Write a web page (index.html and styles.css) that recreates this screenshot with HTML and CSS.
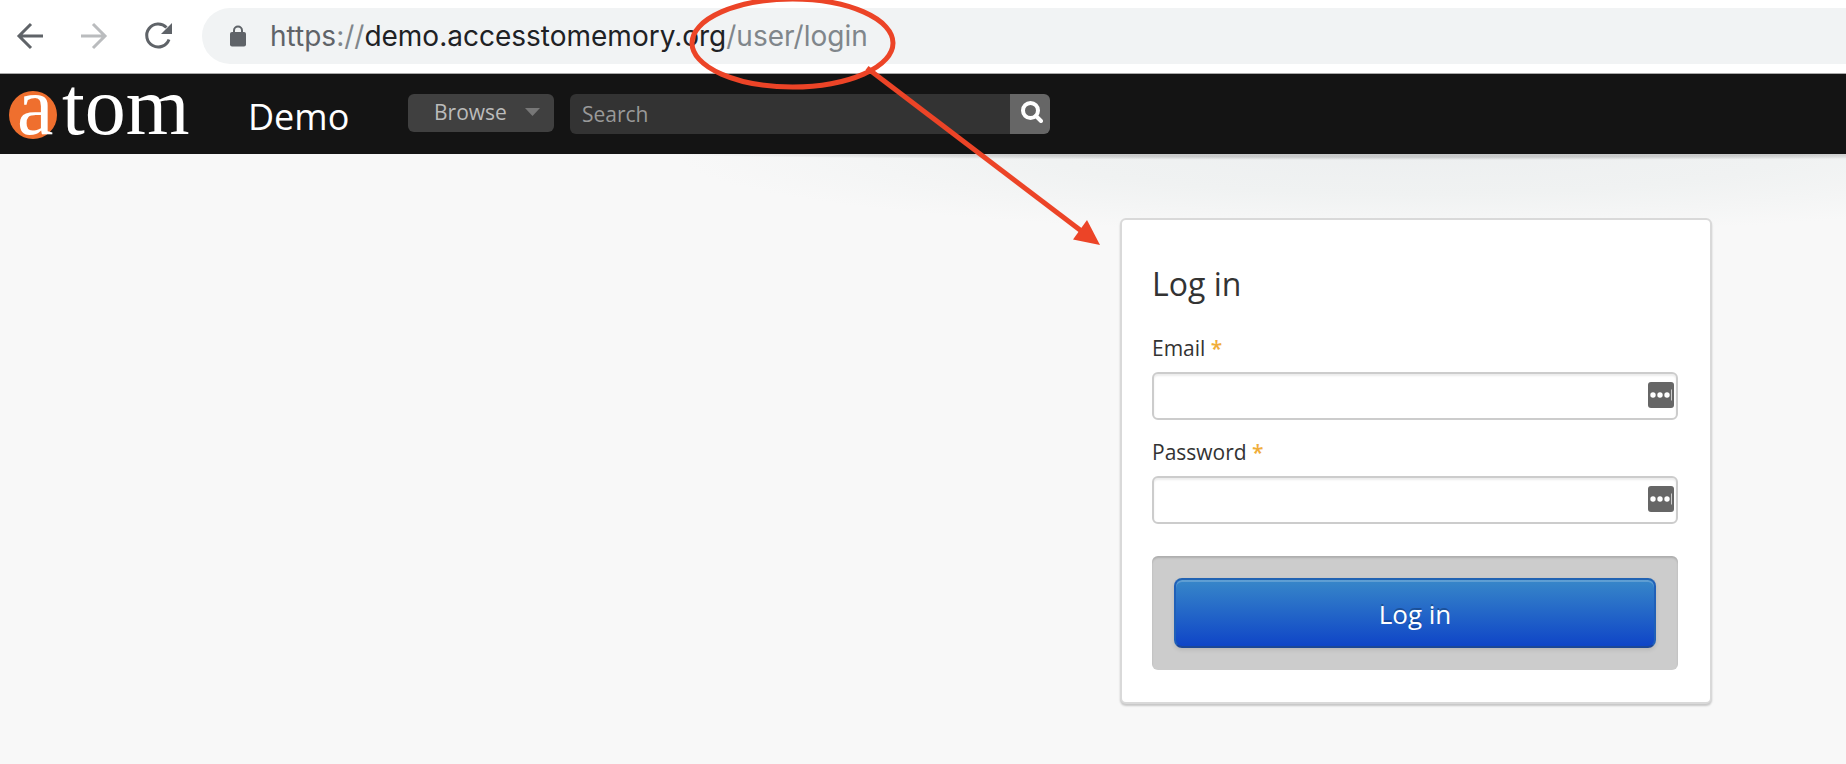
FILE: index.html
```html
<!DOCTYPE html>
<html lang="en">
<head>
<meta charset="utf-8">
<title>AtoM Demo - Log in</title>
<link rel="stylesheet" href="styles.css">
</head>
<body>
<div class="toolbar">
  <nav class="nav-buttons" aria-label="History">
    <button type="button" class="nav-button" aria-label="Back">
      <svg width="28" height="28" viewBox="0 0 28 28" fill="none" stroke="#5f6368" stroke-width="3"><path d="M27 14H4M15 2L3 14L15 26"/></svg>
    </button>
    <button type="button" class="nav-button" aria-label="Forward" disabled>
      <svg width="28" height="28" viewBox="0 0 28 28" fill="none" stroke="#babcbe" stroke-width="3"><path d="M1 14H24M13 2L25 14L13 26"/></svg>
    </button>
    <button type="button" class="nav-button" aria-label="Reload">
      <svg width="28" height="28" viewBox="0 0 28 28"><path d="M22.500 5.500A11.500 11.500 0 1 0 25 17.500" fill="none" stroke="#5f6368" stroke-width="3"/><path d="M28 1V12H17Z" fill="#5f6368"/></svg>
    </button>
  </nav>
  <div class="address" role="textbox" aria-label="Address" tabindex="0">
    <svg class="lock" width="16" height="22" viewBox="0 0 16 22"><path d="M4 8V5.500A4 4 0 0 1 12 5.500V8" fill="none" stroke="#5f6368" stroke-width="2"/><rect y="7" width="16" height="14.500" rx="2" fill="#5f6368"/></svg>
    <span class="url"><span class="scheme">https</span><span class="path">://</span>demo.accesstomemory.org<span class="path">/user/login</span></span>
  </div>
</div>
<header class="site-header">
  <a class="logo" href="#" aria-label="AtoM">
    <svg class="logo-mark" width="184" height="56" viewBox="0 0 184 56"><circle cx="25" cy="29" r="24" fill="#ef6f2e"/><g class="logo-text"><text x="9" y="48">a</text><text x="54" y="48">tom</text></g></svg>
  </a>
  <a class="site-title" href="#">Demo</a>
  <button type="button" class="browse">Browse<svg width="15" height="8" viewBox="0 0 15 8"><path d="M0 0H15L7.500 8Z" fill="#777"/></svg></button>
  <form class="search" role="search">
    <input class="search-input" type="text" placeholder="Search" aria-label="Search">
    <button type="button" class="search-button" aria-label="Search">
      <svg width="22" height="22" viewBox="0 0 22 22" fill="none" stroke="#fff"><circle cx="9.500" cy="9.500" r="7.500" stroke-width="4"/><path d="M15 15L20 20" stroke-width="4" stroke-linecap="round"/></svg>
    </button>
  </form>
</header>
<main class="content">
  <form class="card">
    <h1 class="card-title">Log in</h1>
    <label class="label" for="email">Email <span class="required">*</span></label>
    <div class="field">
      <input class="field-input" id="email" type="email">
      <svg class="filler" width="26" height="26" viewBox="0 0 26 26"><rect width="26" height="26" rx="3" fill="#666"/><g fill="#fff"><circle cx="5" cy="13" r="2.700"/><circle cx="12" cy="13" r="2.700"/><circle cx="19" cy="13" r="2.700"/></g><path d="M23.500 7.500V18.500" stroke="#ccc"/></svg>
    </div>
    <label class="label" for="password">Password <span class="required">*</span></label>
    <div class="field">
      <input class="field-input" id="password" type="password">
      <svg class="filler" width="26" height="26" viewBox="0 0 26 26"><rect width="26" height="26" rx="3" fill="#666"/><g fill="#fff"><circle cx="5" cy="13" r="2.700"/><circle cx="12" cy="13" r="2.700"/><circle cx="19" cy="13" r="2.700"/></g><path d="M23.500 7.500V18.500" stroke="#ccc"/></svg>
    </div>
    <div class="actions"><button type="button" class="submit">Log in</button></div>
  </form>
</main>
<svg class="annotation" width="1110" height="256" viewBox="0 0 1110 256" aria-hidden="true">
  <g fill="none" stroke="#ec4427" stroke-width="5"><ellipse cx="792.500" cy="43" rx="100.500" ry="44"/><path d="M867 68L1084 233"/></g>
  <path d="M1100 245L1087 220L1073 239.500Z" fill="#ec4427"/>
</svg>
</body>
</html>
```
FILE: styles.css
```css
* { box-sizing: border-box; }
body {
  margin: 0;
  min-height: 100vh;
  position: relative;
  background: #f8f8f8;
  color: #333;
  font-family: "Open Sans", "Noto Sans", sans-serif;
  font-size: 21px;
}
button, input { font: inherit; margin: 0; }
button { border: 0; padding: 0; }
svg { display: block; }
a { color: inherit; text-decoration: none; }

.toolbar {
  display: flex;
  align-items: center;
  height: 74px;
  padding: 0 0 2px 16px;
  background: #fff;
  border-bottom: 1px solid #aaa;
}
.nav-buttons { display: flex; gap: 36px; }
.nav-button { background: none; }
.address {
  display: flex;
  flex: 1;
  align-items: center;
  gap: 24px;
  height: 56px;
  margin-left: 30px;
  padding-left: 28px;
  border-radius: 28px 0 0 28px;
  background: #f1f3f4;
}
.url {
  color: #202124;
  font-family: Inter, Roboto, sans-serif;
  font-size: 28px;
}
.scheme { color: #5f6368; }
.path { color: #80868b; }

.site-header {
  display: flex;
  align-items: flex-start;
  height: 80px;
  padding: 12px 8px;
  background: #141414;
}
.logo-mark { overflow: visible; }
.logo-text {
  fill: #fff;
  font-family: "Liberation Serif", serif;
  font-size: 82px;
}
.site-title {
  margin-left: 56px;
  width: 160px;
  line-height: 62px;
  color: #fff;
  font-size: 36px;
}
.browse {
  display: flex;
  align-items: center;
  justify-content: space-between;
  width: 146px;
  height: 38px;
  margin-top: 8px;
  padding: 0 14px 2px 26px;
  border-radius: 6px;
  background: #404040;
  color: #bbb;
}
.search { display: flex; margin: 8px 0 0 16px; }
.search-input {
  width: 440px;
  height: 40px;
  padding: 0 12px;
  border: 0;
  border-radius: 6px 0 0 6px;
  background: #333;
  color: #ccc;
}
.search-input::placeholder { color: #999; opacity: 1; }
.search-button {
  display: flex;
  align-items: center;
  justify-content: center;
  width: 40px;
  height: 40px;
  padding: 0 0 4px 4px;
  border-radius: 0 6px 6px 0;
  background: #666;
}

.content {
  display: flex;
  justify-content: flex-end;
  padding: 64px 134px 58px;
  background:
    radial-gradient(760px 6px at 1416px 0, rgba(0, 0, 0, 0.16) 50%, transparent),
    radial-gradient(740px 80px at 1416px 0, #edeff0, #f0f2f2 50%, #f8f8f8);
}
.card {
  width: 592px;
  padding: 42px 32px 32px 30px;
  border: 2px solid #d9d9d9;
  border-radius: 6px;
  background: #fff;
  box-shadow: 0 2px 2px rgba(0, 0, 0, 0.2);
}
.card-title {
  margin: 0 0 28px;
  font-size: 32px;
  font-weight: 400;
  line-height: 44px;
}
.label { display: block; margin-bottom: 10px; line-height: 28px; }
.required { color: #f0ad3a; font-weight: 600; }
.field { position: relative; margin-bottom: 18px; }
.field-input {
  display: block;
  width: 100%;
  height: 48px;
  padding: 0 40px 0 12px;
  border: 2px solid #ccc;
  border-radius: 6px;
  background: #fff;
  box-shadow: inset 0 2px 2px rgba(0, 0, 0, 0.08);
}
.filler { position: absolute; top: 10px; right: 4px; }
.actions {
  margin-top: 32px;
  padding: 22px;
  border-radius: 6px;
  background: #ccc;
  box-shadow: inset 0 2px 2px rgba(0, 0, 0, 0.15);
}
.submit {
  width: 100%;
  height: 70px;
  padding-top: 2px;
  border: 2px solid;
  border-color: #2163b3 #2060b8 #1c4796;
  border-radius: 8px;
  background: linear-gradient(#3787c9, #0f45c7);
  box-shadow: inset 0 2px 0 rgba(255, 255, 255, 0.2), 0 2px 4px rgba(0, 0, 0, 0.1);
  color: #fff;
  font-size: 26px;
  text-shadow: 0 -2px 0 rgba(0, 0, 0, 0.25);
}
.annotation { position: absolute; top: 0; left: 0; pointer-events: none; }
```
